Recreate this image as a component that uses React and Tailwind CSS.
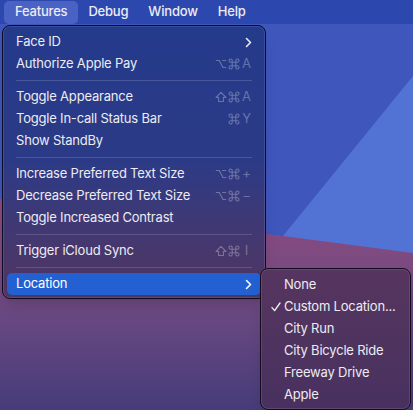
const mainItems = [
  { label: 'Face ID', submenu: true },
  { label: 'Authorize Apple Pay', keys: ['opt', 'cmd', 'A'] },
  { sep: true },
  { label: 'Toggle Appearance', keys: ['shift', 'cmd', 'A'] },
  { label: 'Toggle In-call Status Bar', keys: ['cmd', 'Y'] },
  { label: 'Show StandBy' },
  { sep: true },
  { label: 'Increase Preferred Text Size', keys: ['opt', 'cmd', '+'] },
  { label: 'Decrease Preferred Text Size', keys: ['opt', 'cmd', '−'] },
  { label: 'Toggle Increased Contrast' },
  { sep: true },
  { label: 'Trigger iCloud Sync', keys: ['shift', 'cmd', 'I'] },
  { sep: true },
  { label: 'Location', submenu: true, active: true },
]

const locations = [
  { label: 'None' },
  { label: 'Custom Location...', checked: true },
  { label: 'City Run' },
  { label: 'City Bicycle Ride' },
  { label: 'Freeway Drive' },
  { label: 'Apple' },
]

function Chevron() {
  return (
    <svg className="w-[7px] h-[11px]" viewBox="0 0 7 11" fill="none">
      <path d="M1.5 1.5L5.5 5.5L1.5 9.5" stroke="currentColor" strokeWidth="1.6" strokeLinecap="round" strokeLinejoin="round" />
    </svg>
  )
}

function Check() {
  return (
    <svg className="w-[10px] h-[10px]" viewBox="0 0 10 10" fill="none">
      <path d="M1 5.6L3.6 8.6L9 1" stroke="currentColor" strokeWidth="1.4" strokeLinecap="round" strokeLinejoin="round" />
    </svg>
  )
}

// modifier key glyphs drawn as svg so they look like the macOS ones
function KeyGlyph({ k }) {
  if (k === 'cmd')
    return (
      <svg className="w-[12px] h-[12px]" viewBox="0 0 12 12" fill="none" stroke="currentColor" strokeWidth="1.1">
        <path d="M4.2 4.2h3.6v3.6H4.2z M4.2 4.2V2.6a1.6 1.6 0 1 0-1.6 1.6h1.6 M7.8 4.2V2.6a1.6 1.6 0 1 1 1.6 1.6H7.8 M4.2 7.8v1.6a1.6 1.6 0 1 1-1.6-1.6h1.6 M7.8 7.8v1.6a1.6 1.6 0 1 0 1.6-1.6H7.8" />
      </svg>
    )
  if (k === 'opt')
    return (
      <svg className="w-[12px] h-[12px]" viewBox="0 0 12 12" fill="none" stroke="currentColor" strokeWidth="1.2">
        <path d="M0.8 2.5H4.2L8 9.5H11.2 M7.2 2.5H11.2" />
      </svg>
    )
  if (k === 'shift')
    return (
      <svg className="w-[12px] h-[12px]" viewBox="0 0 12 12" fill="none" stroke="currentColor" strokeWidth="1.1" strokeLinejoin="round">
        <path d="M6 1.3L11 6.4H8.4V10.5H3.6V6.4H1Z" />
      </svg>
    )
  return <span className="w-[11px] text-center">{k}</span>
}

function Wallpaper() {
  return (
    <svg className="absolute inset-0" width="413" height="410" viewBox="0 0 413 410">
      <defs>
        <linearGradient id="band" x1="0" y1="0" x2="0" y2="1">
          <stop offset="0" stopColor="#8b4c80" />
          <stop offset="0.3" stopColor="#7c4a80" />
          <stop offset="0.55" stopColor="#694881" />
          <stop offset="1" stopColor="#463c79" />
        </linearGradient>
      </defs>
      <rect width="413" height="410" fill="#3f56bc" />
      <polygon points="283,236 413,76 413,260 283,260" fill="#5273d4" />
      <polygon points="0,199 413,253 413,410 0,410" fill="url(#band)" />
    </svg>
  )
}

export default function App() {
  return (
    <div
      className="relative w-[413px] h-[410px] overflow-hidden text-[13px] tracking-[-0.2px] text-[#ececf2]"
      style={{ fontFamily: 'Inter, "DejaVu Sans", sans-serif' }}
    >
      <Wallpaper />

      {/* menu bar */}
      <div className="relative h-[24px] bg-[#2c47ae] flex items-center pl-[4px] font-medium">
        <div className="h-[23px] px-[11px] flex items-center rounded-[5px] bg-[#4a62c4]">Features</div>
        <div className="px-[10px]">Debug</div>
        <div className="px-[10px]">Window</div>
        <div className="px-[10px]">Help</div>
      </div>

      <div className="relative">
        {/* main menu */}
        <div className="ml-[2px] mt-[1px] w-[264px] rounded-[8px] border border-[#0c0c20] bg-gradient-to-b from-[#243a8c] via-[#2c3a86] to-[#52345f] shadow-lg">
          <div className="rounded-[7px] border border-white/10 px-[3px] pt-[4px] pb-[2px]">
            {mainItems.map((it, i) =>
              it.sep ? (
                <div key={i} className="h-[11px] flex items-center px-[9px]">
                  <div className="h-px w-full bg-white/15" />
                </div>
              ) : (
                <div
                  key={i}
                  className={`h-[22px] flex items-center justify-between pl-[9px] pr-[9px] rounded-[5px] ${
                    it.active ? 'bg-[#2360d2] text-white' : ''
                  }`}
                >
                  <span>{it.label}</span>
                  {it.submenu && <Chevron />}
                  {it.keys && (
                    <span className="flex items-center gap-[1px] text-white/30">
                      {it.keys.map((k, j) => (
                        <KeyGlyph key={j} k={k} />
                      ))}
                    </span>
                  )}
                </div>
              )
            )}
          </div>
        </div>

        {/* location submenu */}
        <div className="absolute left-[260px] top-[243px] w-[151px] rounded-[8px] border border-[#140c1e] bg-gradient-to-b from-[#56355f] to-[#48315f] shadow-lg">
          <div className="rounded-[7px] border border-white/10 pt-[4px] pb-[2px]">
            {locations.map((l) => (
              <div key={l.label} className="h-[22px] flex items-center">
                <span className="w-[22px] flex justify-end pr-[3px]">{l.checked && <Check />}</span>
                <span>{l.label}</span>
              </div>
            ))}
          </div>
        </div>
      </div>
    </div>
  )
}
